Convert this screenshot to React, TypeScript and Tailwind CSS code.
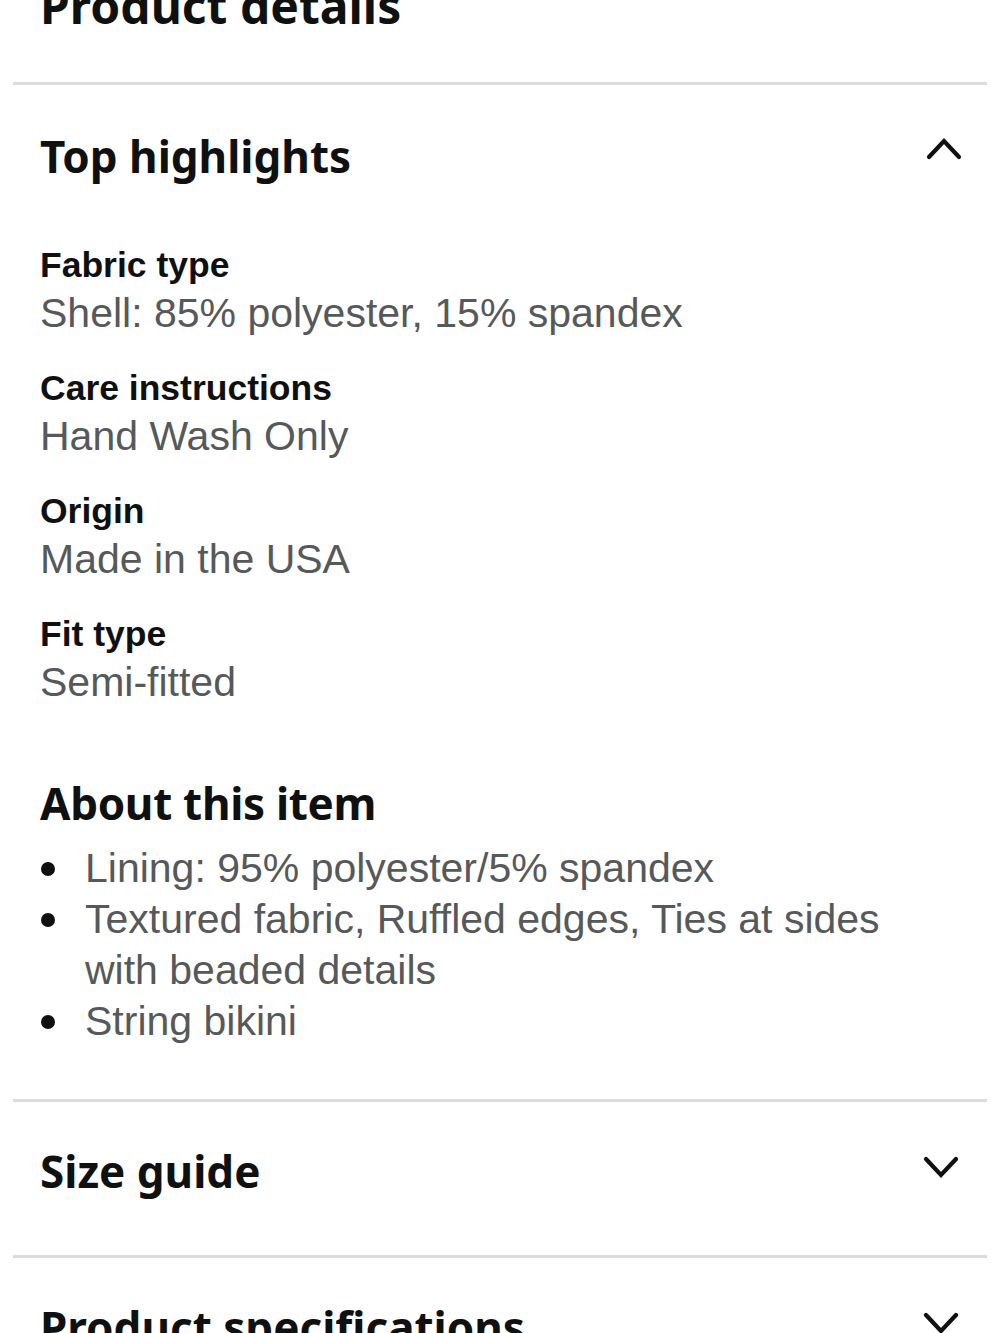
import { ReactNode } from 'react';

const heading = "font-['Noto_Sans',sans-serif] font-bold text-[#0f1111]";
const body = "font-['Liberation_Sans',Arial,sans-serif]";

type Highlight = {
  label: string;
  value: string;
};

const highlights: Highlight[] = [
  { label: 'Fabric type', value: 'Shell: 85% polyester, 15% spandex' },
  { label: 'Care instructions', value: 'Hand Wash Only' },
  { label: 'Origin', value: 'Made in the USA' },
  { label: 'Fit type', value: 'Semi-fitted' },
];

const aboutItems = [
  'Lining: 95% polyester/5% spandex',
  'Textured fabric, Ruffled edges, Ties at sides with beaded details',
  'String bikini',
];

function Chevron({ up = false }: { up?: boolean }) {
  return (
    <svg width="36" height="26" viewBox="0 0 36 26" fill="none" className="shrink-0">
      <polyline
        points={up ? '3,21 18,5 33,21' : '3,4 18,20 33,4'}
        stroke="#0f1111"
        strokeWidth="4.2"
        strokeLinecap="round"
        strokeLinejoin="miter"
      />
    </svg>
  );
}

function Divider() {
  return <div className="h-[3px] bg-[#dcdcdc]" />;
}

function SectionRow({ title, children }: { title: string; children?: ReactNode }) {
  return (
    <div className="flex items-start justify-between">
      <h2 className={`${heading} text-[44px] leading-[44px]`}>{title}</h2>
      {children}
    </div>
  );
}

export default function App() {
  return (
    <div className="w-[1000px] h-[1333px] overflow-hidden bg-white px-[13px]">
      {/* Page title, scrolled partly out of view */}
      <div className="px-[27px] -mt-[18px] pb-[52px]">
        <h1 className={`${heading} text-[48px] leading-[48px]`}>Product details</h1>
      </div>

      <Divider />

      {/* Top highlights (expanded) */}
      <section className="px-[27px] pt-[49px] pb-[52px]">
        <SectionRow title="Top highlights">
          <div className="mt-[2px] -mr-[2px]">
            <Chevron up />
          </div>
        </SectionRow>

        <dl className="mt-[63px] flex flex-col gap-[27px]">
          {highlights.map((h) => (
            <div key={h.label}>
              <dt className={`${body} font-bold text-[35.5px] leading-[48px] text-[#0f1111]`}>{h.label}</dt>
              <dd className={`${body} text-[41px] leading-[48px] text-[#565959]`}>{h.value}</dd>
            </div>
          ))}
        </dl>

        <h2 className={`${heading} mt-[75px] text-[44px] leading-[44px] tracking-[-0.3px]`}>About this item</h2>

        <ul className="mt-[18px] pr-[20px]">
          {aboutItems.map((item) => (
            <li key={item} className="flex">
              <span className="w-[45px] shrink-0 flex justify-start h-[51px] items-center pl-[1px]">
                <span className="w-[14px] h-[14px] rounded-full bg-[#0f1111]" />
              </span>
              <span className={`${body} text-[41px] leading-[51px] text-[#565959]`}>{item}</span>
            </li>
          ))}
        </ul>
      </section>

      <Divider />

      {/* Size guide (collapsed) */}
      <section className="px-[27px] pt-[47px] pb-[62px]">
        <SectionRow title="Size guide">
          <div className="mt-[6px] mr-[1px]">
            <Chevron />
          </div>
        </SectionRow>
      </section>

      <Divider />

      {/* Product specifications (collapsed) */}
      <section className="px-[27px] pt-[47px] pb-[62px]">
        <SectionRow title="Product specifications">
          <div className="mt-[6px] mr-[1px]">
            <Chevron />
          </div>
        </SectionRow>
      </section>
    </div>
  );
}
